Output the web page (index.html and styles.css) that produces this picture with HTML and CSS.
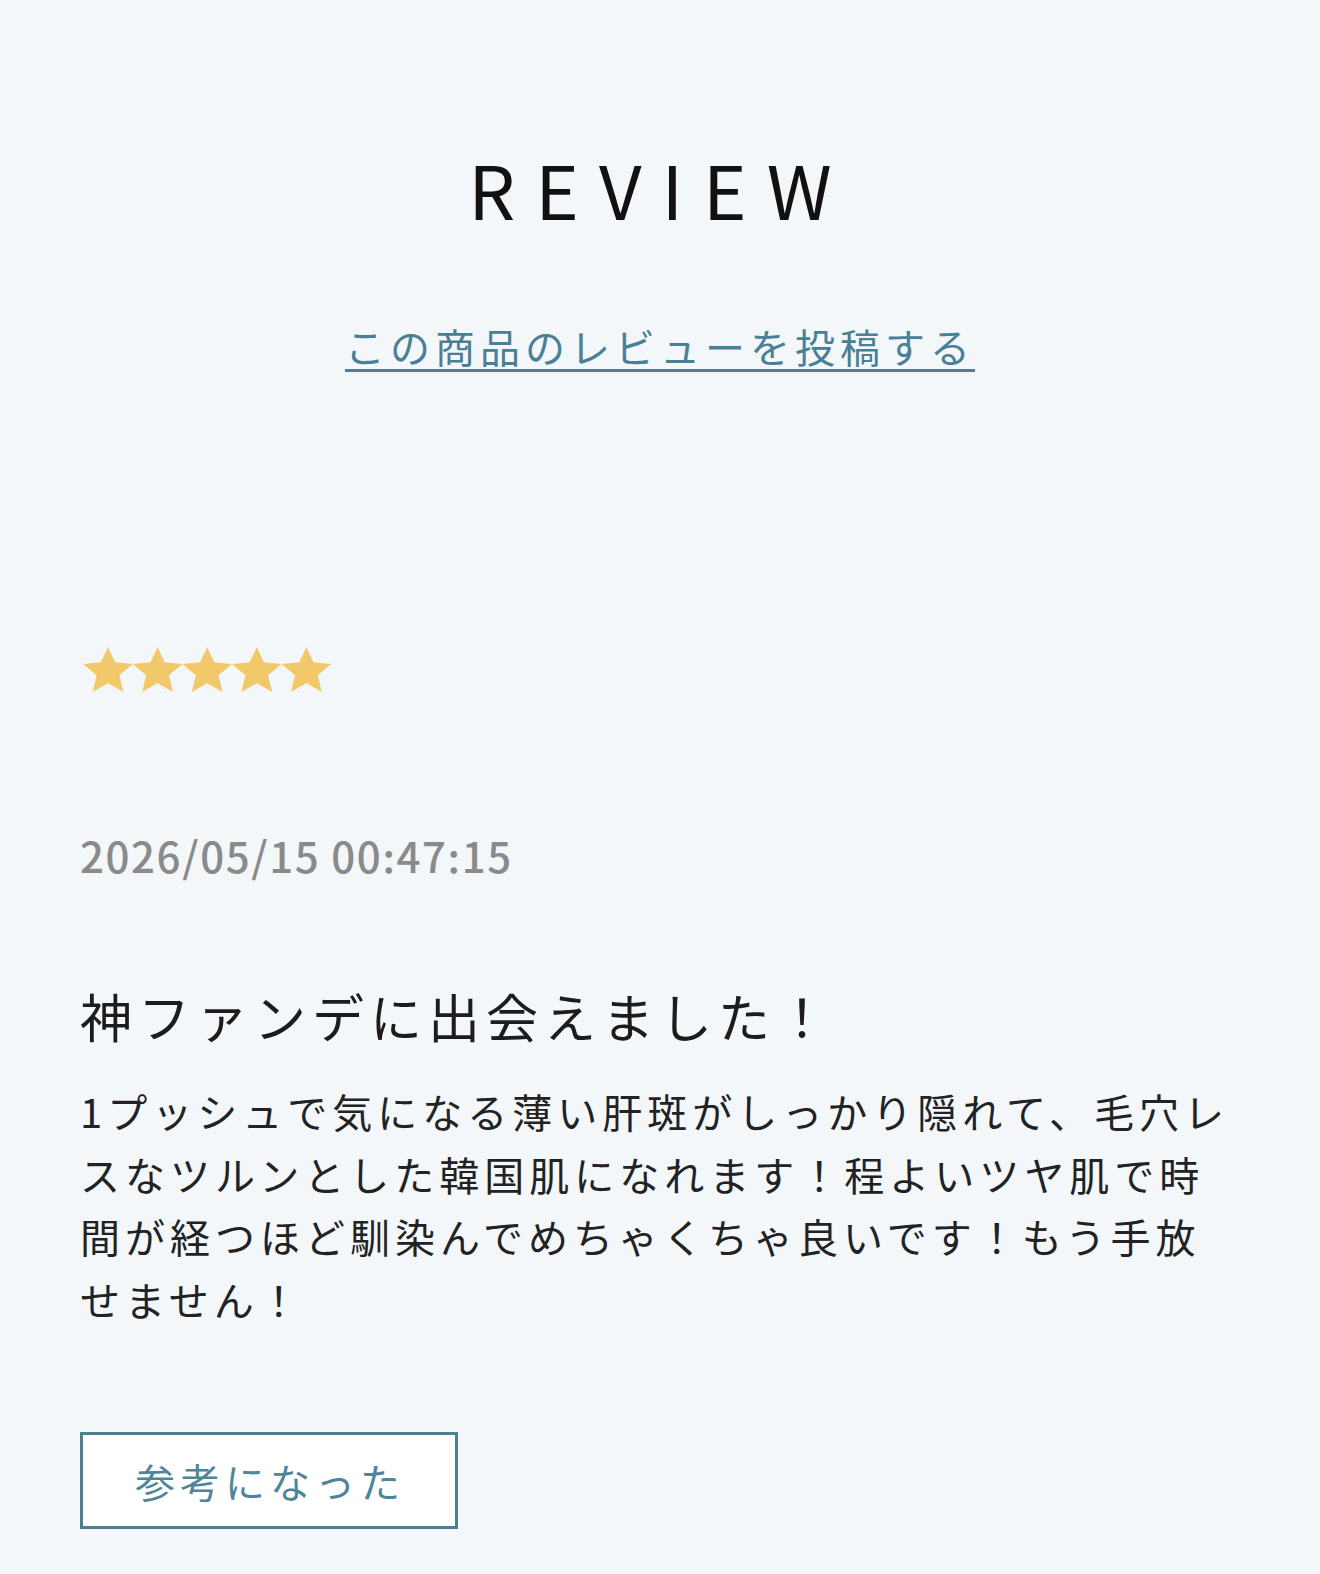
FILE: index.html
```html
<!DOCTYPE html>
<html lang="ja">
  <head>
    <meta charset="UTF-8">
    <meta name="viewport" content="width=device-width, initial-scale=1.0">
    <title>Review</title>
    <link rel="stylesheet" href="styles.css">
  </head>
  <body>
    <section class="review">
      <h2 class="review-title">REVIEW</h2>
      <a class="review-post" href="#">この商品のレビューを投稿する</a>

      <div class="review-item">
        <div class="stars">
          <svg width="250" height="48" viewBox="0 0 250 48">
            <defs>
              <polygon id="star" points="25,2 32.1,17.3 49.8,18.9 36.4,30.3 40.4,47 25,38.3 9.6,47 13.6,30.3 0.2,18.9 17.9,17.3"></polygon>
            </defs>
            <use href="#star" x="0"></use>
            <use href="#star" x="49.6"></use>
            <use href="#star" x="99.2"></use>
            <use href="#star" x="148.8"></use>
            <use href="#star" x="198.4"></use>
          </svg>
        </div>
        <p class="date">2026/05/15 00:47:15</p>
        <h3 class="item-title">神ファンデに出会えました！</h3>
        <p class="item-body">1プッシュで気になる薄い肝斑がしっかり隠れて、毛穴レスなツルンとした韓国肌になれます！程よいツヤ肌で時間が経つほど馴染んでめちゃくちゃ良いです！もう手放せません！</p>
        <button class="helpful">参考になった</button>
      </div>
    </section>
  </body>
</html>
```

FILE: styles.css
```css
body{
  margin: 0;
  background-color: #f4f7fa;
  font-family: 'Noto Sans CJK JP', 'Noto Sans', sans-serif;
  color: #1c1c1c;
}
.review{
  display: flex;
  flex-direction: column;
  padding: 151px 80px 50px;
}
.review-title{
  margin: 0;
  font-size: 74px;
  font-weight: 400;
  line-height: 1;
  letter-spacing: 20px;
  padding-left: 0;
  text-align: center;
  color: #111;
}
.review-post{
  align-self: center;
  margin-top: 101px;
  font-size: 40px;
  line-height: 1;
  letter-spacing: 5px;
  color: #4a8096;
  text-decoration: underline;
  text-decoration-thickness: 3px;
  text-underline-offset: 6px;
}
.review-item{
  display: flex;
  flex-direction: column;
  align-items: flex-start;
  margin-top: 279px;
}
.stars{
  height: 48px;
  margin-left: 3px;
}
.stars svg{
  display: block;
  fill: #f2c96a;
}
.date{
  margin: 141px 0 0;
  font-size: 42px;
  font-weight: 500;
  line-height: 1;
  letter-spacing: 1.6px;
  color: #8a8a8a;
}
.item-title{
  margin: 114px 0 0;
  font-size: 52px;
  font-weight: 400;
  line-height: 1;
  letter-spacing: 6px;
}
.item-body{
  margin: 38px 0 0;
  font-size: 40px;
  line-height: 62.5px;
  letter-spacing: 5px;
  color: #222;
}
.helpful{
  box-sizing: border-box;
  height: 97px;
  margin-top: 102px;
  padding: 0 50px 0 52px;
  background-color: #fff;
  border: 3px solid #4d7f91;
  border-radius: 0;
  font-family: inherit;
  font-size: 40px;
  line-height: 1;
  letter-spacing: 5px;
  color: #4f8599;
}
```
